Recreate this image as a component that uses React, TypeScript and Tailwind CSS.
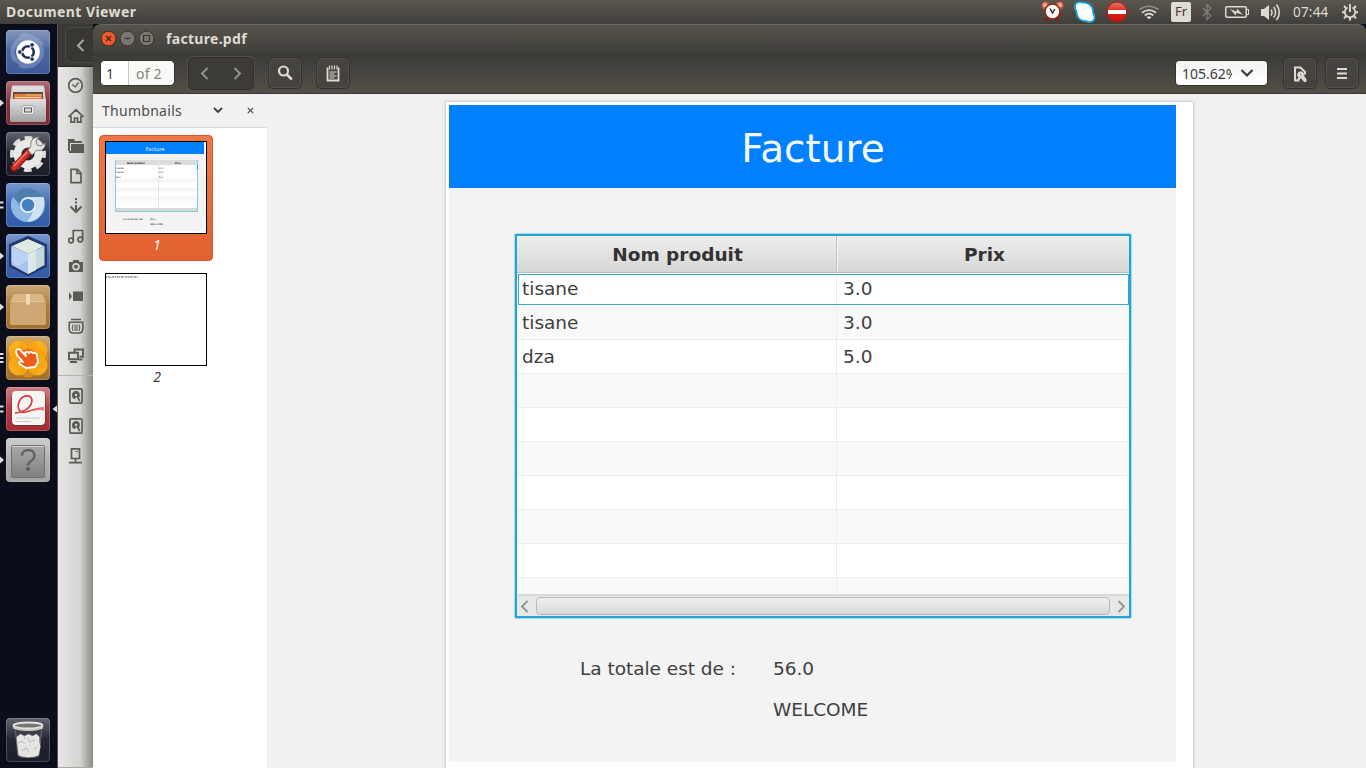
import React from "react";

const UI = "font-['Noto_Sans','Open_Sans',sans-serif]";
const DOC = "font-['DejaVu_Sans',sans-serif]";

/* ---------- Top panel ---------- */

function TopPanel() {
  return (
    <header className={`flex h-6 shrink-0 items-center bg-linear-to-b from-[#5b574d] to-[#403f3a] text-[#dfdbd2] ${UI}`}>
      <span className="ml-[6px] text-[14px] leading-6 font-bold tracking-[0.42px]">Document Viewer</span>
      <div className="ml-auto flex items-center pr-[7px]">
        <svg width="24" height="24" viewBox="1040 0 24 24" className="mr-[10px]">
          <path d="M1046 17l-2 4h3.500l1-2zM1058 17l2 4h-3.500l-1-2z" fill="#7d2313" />
          <circle cx="1045.500" cy="5.500" r="3.900" fill="#c95a48" />
          <circle cx="1059.500" cy="5.500" r="3.900" fill="#c95a48" />
          <circle cx="1045" cy="5" r="2.200" fill="#eca699" />
          <circle cx="1060" cy="5" r="2.200" fill="#eca699" />
          <circle cx="1052.500" cy="11.500" r="7.500" fill="#f8f8f6" stroke="#8e2b18" strokeWidth="1.600" />
          <path d="M1050 8.500l2.500 4.500 2.300-4" fill="none" stroke="#333" strokeWidth="1.500" />
        </svg>
        <svg width="23" height="24" viewBox="1074 0 23 24" className="mr-[9px]">
          <path d="M1076 3.500c2-2 5-1.500 7-.8 6-.5 10 4 10 8.300 0 1 0 1.500.3 2.500 2 3 1.500 6.500-.8 7.800-2 1.200-4.800.8-6.500-.3-6 .5-9.500-4-9.500-9.500-1.800-3-2-6-.5-8z" fill="#fff" stroke="#12a5de" strokeWidth="1.800" />
        </svg>
        <svg width="22" height="24" viewBox="1106 0 22 24" className="mr-[10px]">
          <defs><linearGradient id="stop" x2="0" y2="1"><stop stopColor="#e8776b" /><stop offset=".5" stopColor="#d8251b" /><stop offset="1" stopColor="#c01510" /></linearGradient></defs>
          <circle cx="1117" cy="12" r="10" fill="url(#stop)" stroke="#b3170f" />
          <rect x="1108" y="10" width="18" height="4" fill="#fff" />
        </svg>
        <svg width="22" height="24" viewBox="1138 0 22 24" className="mr-[11px]" fill="none" strokeWidth="1.700">
          <path d="M1139.500 9.500q9.500-6.500 19 0" stroke="#8e8b82" />
          <path d="M1142 12.800q7-5.200 14 0" stroke="#dfdbd2" />
          <path d="M1144.700 15.500q4.300-3.600 8.600 0" stroke="#dfdbd2" />
          <path d="M1146.500 17.300q2.500-2 5 0l-2.500 2z" fill="#dfdbd2" />
        </svg>
        <span className="mr-[11px] flex h-5 w-5 items-center justify-center rounded-[2px] bg-[#dfdbd2] text-[13px] text-[#3c3b37]">Fr</span>
        <svg width="12" height="24" viewBox="1202 0 12 24" className="mr-[11px]" fill="none" stroke="#84817a" strokeWidth="1.200">
          <path d="M1203 8l8 8-4 3.500V4.500l4 3.500-8 8" />
        </svg>
        <svg width="24" height="24" viewBox="1225 0 24 24" className="mr-[11px]">
          <rect x="1225.750" y="6.750" width="20.500" height="10.500" rx="1" fill="none" stroke="#dfdbd2" strokeWidth="1.500" />
          <rect x="1246.500" y="9.500" width="2" height="5" fill="#403f3a" stroke="#dfdbd2" />
          <path d="M1230 9l6.500 2.800.5-3 6 6-6.500-2-.7 2.700z" fill="#dfdbd2" />
        </svg>
        <svg width="22" height="24" viewBox="1260 0 22 24" className="mr-[11px]" fill="none" stroke="#dfdbd2" strokeWidth="1.500">
          <path d="M1261 9h3l5-4v15l-5-4h-3z" fill="#dfdbd2" stroke="none" />
          <path d="M1271 9.500q2 3 0 6M1273.700 7q3.800 5.300 0 10.500M1276.500 4.500q5.600 8 0 15.500" />
        </svg>
        <span className="mr-[11px] w-[38px] text-[13.500px] whitespace-nowrap tracking-[0.200px]">07:44</span>
        <svg width="17" height="24" viewBox="1342 0 17 24" fill="none" stroke="#dfdbd2">
          <path d="M1347.500 7.500a5.200 5.200 0 1 0 5 0" strokeWidth="1.700" />
          <path d="M1350 4v8" strokeWidth="1.900" />
          <path d="M1344 6l2 2M1356 6l-2 2M1342 12.200h3M1355 12.200h3M1344 18.200l2-2M1356 18.200l-2-2M1350 17.500v3" strokeWidth="2" />
        </svg>
      </div>
    </header>
  );
}

/* ---------- Launcher ---------- */

function Tile({ fill, stroke = "#ffffff30", mark, children }: { fill: string; stroke?: string; mark?: number; children?: React.ReactNode }) {
  return (
    <svg width="57" height="44" viewBox="0 0 57 44" className="block shrink-0">
      <rect x="6" y="0" width="44" height="44" rx="4" fill={fill} />
      <rect x="6" y="0" width="44" height="20" rx="4" fill="url(#gloss)" />
      {children}
      <rect x="6.500" y=".5" width="43" height="43" rx="3.500" fill="none" stroke={stroke} />
      {mark === 1 && <path d="M0 18.500l4 3.500-4 3.500z" fill="#dedede" />}
      {mark === 2 && <path d="M0 19.500h3.500M0 24.500h3.500" stroke="#dedede" strokeWidth="2" />}
      {mark === 3 && <path d="M0 18h3.500M0 22h3.500M0 26h3.500" stroke="#dedede" strokeWidth="2" />}
    </svg>
  );
}

function Launcher() {
  return (
    <nav className="flex w-[57px] shrink-0 flex-col justify-between bg-[#0b0d1a] pt-[6px] pb-[6px]">
      <div className="flex flex-col gap-[7px]">
        <Tile fill="url(#dash)">
          <defs>
            <linearGradient id="gloss" x2="0" y2="1"><stop stopColor="#fff" stopOpacity=".25" /><stop offset="1" stopColor="#fff" stopOpacity=".02" /></linearGradient>
            <linearGradient id="dash" x2="0" y2="1"><stop stopColor="#5873a8" /><stop offset="1" stopColor="#3e5a9a" /></linearGradient>
            <linearGradient id="red" x2="0" y2="1"><stop stopColor="#933b47" /><stop offset="1" stopColor="#7b2b36" /></linearGradient>
            <linearGradient id="blue" x2="0" y2="1"><stop stopColor="#4c76bd" /><stop offset="1" stopColor="#315aa8" /></linearGradient>
            <linearGradient id="dark" x2="0" y2="1"><stop stopColor="#2c2e3b" /><stop offset="1" stopColor="#1c1e2b" /></linearGradient>
            <linearGradient id="tan" x2="0" y2="1"><stop stopColor="#b98b4b" /><stop offset="1" stopColor="#a06f2e" /></linearGradient>
            <linearGradient id="crimson" x2="0" y2="1"><stop stopColor="#c0525a" /><stop offset="1" stopColor="#a52a32" /></linearGradient>
            <linearGradient id="grey" x2="0" y2="1"><stop stopColor="#bcbcbc" /><stop offset="1" stopColor="#a2a2a2" /></linearGradient>
            <linearGradient id="silver" x2="0" y2="1"><stop stopColor="#e0e0e0" /><stop offset="1" stopColor="#a2a2a2" /></linearGradient>
            <linearGradient id="unknown" x2="0" y2="1"><stop stopColor="#a9a9a9" /><stop offset="1" stopColor="#808080" /></linearGradient>
          </defs>
          <g fill="none" stroke="#c2cee2" opacity=".3" strokeWidth="4">
            <path d="M15 31C8 20 17 4 33 9M14 18C17 4 35 3 42 15M20 6C33 2 45 16 41 28M39 15C47 29 31 41 20 35M35 35C18 38 9 26 14 15" />
          </g>
          <circle cx="28" cy="22" r="11.800" fill="#fff" />
          <circle cx="28" cy="22" r="5.800" fill="none" stroke="#233258" strokeWidth="2.600" />
          <path d="M28 22L18 22M28 22l5-9M28 22l5 9" stroke="#fff" strokeWidth="1.400" />
          <g fill="#233258" stroke="#fff" strokeWidth=".7"><circle cx="19.800" cy="22" r="2.200" /><circle cx="32.100" cy="14.900" r="2.200" /><circle cx="32.100" cy="29.100" r="2.200" /></g>
        </Tile>
        <Tile fill="url(#red)" mark={1}>
          <path d="M12 5h32l2 15v18a3 3 0 0 1-3 3H13a3 3 0 0 1-3-3V20z" fill="url(#silver)" />
          <path d="M12.500 4.500h31l1 4h-33z" fill="#dcdcdc" />
          <rect x="13" y="11" width="30" height="9" fill="#5b4d45" />
          <path d="M14 13h28v6H14z" fill="#e79b4c" /><path d="M14 13h10l2 2h16v5H14z" fill="#e8763e" />
          <path d="M15 16.500h26" stroke="#f8d9ae" />
          <rect x="10" y="18" width="36" height="23" rx="2" fill="url(#silver)" />
          <rect x="22" y="24.500" width="12" height="9" rx="2" fill="#ececec" stroke="#aaa" />
          <rect x="24.500" y="27" width="7" height="4" fill="#ddd" stroke="#555" />
        </Tile>
        <Tile fill="url(#dark)">
          <circle cx="28" cy="22" r="15.500" fill="none" stroke="#dededc" strokeWidth="5" strokeDasharray="7.500 4.674" strokeDashoffset="3.750" />
          <circle cx="28" cy="22" r="10.500" fill="none" stroke="#e9e9e7" strokeWidth="8" />
          <circle cx="28" cy="22" r="6" fill="#2b2c36" />
          <path d="M14 36l16-17" stroke="#8d1513" strokeWidth="7" strokeLinecap="round" />
          <path d="M14 35.500L29.500 19" stroke="#d83227" strokeWidth="5" strokeLinecap="round" />
          <path d="M14 34l13-14" stroke="#f38273" strokeWidth="1.200" />
          <path d="M28 18l3-4c-1-5 2-9 8-9l-3 4 1 4 4 1 4-3c1 5-4 9-8 7l-5 5z" fill="#e6e6e4" stroke="#7d7d7b" />
        </Tile>
        <Tile fill="url(#blue)" mark={2}>
          <circle cx="28" cy="22" r="17" fill="#70a5d7" />
          <path d="M28 5a17 17 0 0 1 15.500 10H28a8 8 0 0 0-8 6L13 14A17 17 0 0 1 28 5z" fill="#4e7faa" />
          <path d="M28 14h15.500C47 24 41 39 27 39l8-14c3-5-1-11-7-11z" fill="#cfe2f3" />
          <path d="M13 14a17 17 0 0 0 13 25l6-10c-5 2-9 0-11-4z" fill="#8fbbe3" />
          <circle cx="28" cy="22" r="8" fill="#eef5fb" /><circle cx="28" cy="22" r="6.300" fill="#477fc4" />
        </Tile>
        <Tile fill="url(#blue)" mark={1}>
          <path d="M28 3l18 8v21L28 41 10 32V11z" fill="#24376a" stroke="#24376a" strokeWidth="2" strokeLinejoin="round" />
          <path d="M28 5l16 7-16 8-16-8z" fill="#deebe3" />
          <path d="M11.500 12l16.500 8v20l-16.500-9z" fill="#a8c3ed" /><path d="M11.500 12l16.500 8v6L18 32l-6.500-3z" fill="#bcd2f4" />
          <path d="M44.500 12L28 20v20l16.500-9z" fill="#c4d9df" /><path d="M28 20l8-4v20l-8 4z" fill="#dbe8ea" />
        </Tile>
        <Tile fill="url(#tan)" mark={1}>
          <path d="M14 9h28l4 8v21a2 2 0 0 1-2 2H12a2 2 0 0 1-2-2V17z" fill="#cda874" />
          <path d="M14 9h28l3 7H11z" fill="#d9b784" /><path d="M11 16.500h34" stroke="#e2c595" />
          <path d="M26 9h4v10l-2 1-2-1z" fill="#eedab7" />
        </Tile>
        <Tile fill="url(#tan)" mark={3}>
          <g fill="#ffb313" opacity=".9"><circle cx="18.500" cy="14.500" r="10" /><circle cx="37.500" cy="14.500" r="10" /><circle cx="18.500" cy="29.500" r="10" /><circle cx="37.500" cy="29.500" r="10" /></g>
          <g fill="#f9a012" opacity=".6"><circle cx="28" cy="12.500" r="10" /><circle cx="28" cy="31.500" r="10" /><circle cx="18" cy="22" r="10" /><circle cx="38" cy="22" r="10" /></g>
          <circle cx="28" cy="22" r="9.500" fill="#f4701c" />
          <path d="M16 15c1-3 4-2 5 0l5 5-1-3c1-2 3-1 4 0 1-2 3-1 4 0 2-1 4 1 4 3l1 6-3 5-9 1c-3-2-6-3-7-5 0-2 3-2 4-1l-6-7z" fill="#f05b1c" stroke="#fff" strokeWidth="1.800" strokeLinejoin="round" />
        </Tile>
        <Tile fill="url(#crimson)" mark={2}>
          <rect x="11.500" y="5" width="34" height="34" rx="4" fill="#7d2930" /><rect x="12" y="4" width="33" height="34" rx="4" fill="#f5f5f4" />
          <path d="M15 26c11-1 17-7 17-13-1-6-9-5-12 0-4 7-1 14 6 12 6-1 9-4 18-4" fill="none" stroke="#e0393f" strokeWidth="1.700" />
          <path d="M29 24c5-1 10-4 15-3v3c-5-2-8-.5-11 0z" fill="#e77b7d" />
          <path d="M16 31h24M16 34.500h15" stroke="#c8c8c8" />
          <path d="M57 18.500L52.500 22l4.500 3.500z" fill="#dedede" />
        </Tile>
        <Tile fill="url(#grey)" mark={1}>
          <rect x="11.500" y="7.500" width="33" height="32" rx="1" fill="url(#unknown)" stroke="#707070" />
          <path d="M12 8.500h32" stroke="#cfcfcf" />
          <path d="M22 17.500c0-7 12.500-7.500 12.500 0 0 6-6.500 5-6.500 10" fill="none" stroke="#626262" strokeWidth="2.500" /><circle cx="28" cy="31" r="2" fill="#5e5e5e" />
        </Tile>
      </div>
      <Tile fill="url(#dark)">
        <path d="M15 9h27l-3 29c-4 2-18 2-21 0z" fill="#3c3e4a" stroke="#656771" />
        <path d="M16.500 19l4-3 4 2 4-2 4 2 4-2 3 3v5l1 5-2 8c-3 3-17 3-20 0l-1-8z" fill="#e4e4e2" />
        <path d="M18 25l4-2 3 3M28 20l2 4 5-2M22 33l4-3 3 4M34 31l3-2M24 18l1 3" fill="none" stroke="#b7b8b6" />
        <ellipse cx="28" cy="7.500" rx="14.500" ry="3" fill="#777" stroke="#e5e5e1" strokeWidth="1.800" />
        <path d="M13 8v2c4 4 27 4 30 0V8c-4 4-26 4-30 0z" fill="#cacac6" />
      </Tile>
    </nav>
  );
}

/* ---------- Partly covered file manager window ---------- */

function Place({ className = "", children }: { className?: string; children: React.ReactNode }) {
  return (
    <svg width="16" height="16" viewBox="0 0 16 16" fill="none" stroke="#5b5a57" strokeWidth="1.700" className={`block shrink-0 ${className}`}>
      {children}
    </svg>
  );
}

function HarddiskIcon() {
  return (
    <>
      <rect x="1.900" y=".9" width="12.200" height="14.200" rx="1" />
      <path d="M4 7.500a4 4 0 1 1 7 2l1.500 3.500-1.500.5L8.500 9l-2 2.300A4 4 0 0 1 4 7.500z" fill="#5b5a57" stroke="none" />
      <circle cx="8" cy="7" r="1.200" fill="#d2d1cf" stroke="none" />
    </>
  );
}

function BackWindow() {
  return (
    <aside className="flex w-9 shrink-0 flex-col border-l border-[#56545a] bg-[#3b3a36]">
      <div className="flex h-[43px] items-center justify-end border-b border-[#25241f]">
        <div className="flex h-9 w-[28px] items-center justify-center rounded-l-md border border-r-0 border-[#4b4944] bg-[#383733]">
          <svg width="9" height="13" viewBox="0 0 9 13" className="ml-[2px]" fill="none" stroke="#aba89f" strokeWidth="2"><path d="M7.500 1L2 6.500 7.500 12" /></svg>
        </div>
      </div>
      <div className="flex grow flex-col border-b border-[#aaa9a6] bg-linear-to-r from-[#e9e8e6] via-[#d3d2d0] via-65% to-[#8b8a87] pt-[10px]">
        <div className="flex flex-col gap-[14px] pl-[10px]">
          <Place><circle cx="7.500" cy="8.500" r="6.800" /><path d="M4 7.500l3.300 2.300L10.500 5.500" strokeWidth="1.300" /></Place>
          <Place className="mt-px"><path d="M.5 9L8 1.800 15.500 9M3 8v6.200h3.500V10h3v4.200H13V8" /></Place>
          <Place><path d="M0 1h6l1 2h7v2H2v8H0zM3 6h13v9H1V13h2z" fill="#5b5a57" stroke="none" /></Place>
          <Place><path d="M3 1.300h6.500L13 5v9.700H3zM9 1v4.500h4" /></Place>
          <Place><path d="M8 0v2M8 3.500v2M8 7v7M2.500 8.500L8 14l5.500-5.500" strokeWidth="2" /></Place>
          <Place><circle cx="3" cy="12.500" r="2.300" /><circle cx="12.300" cy="11.500" r="2.300" /><path d="M5.300 12.500V2.500h9.300v9" /></Place>
          <Place><path d="M1 4h3.500l1-2h5l1 2H15v10H1z" fill="#5b5a57" stroke="none" /><circle cx="8" cy="8.800" r="2.900" fill="#5b5a57" stroke="#d5d4d2" /></Place>
          <Place><path d="M5 3.500h10v9.500H5zM1 4l3 4.300-3 4.300z" fill="#5b5a57" stroke="none" /></Place>
          <Place><path d="M3 1.500h10M.5 4.200h15M1.500 5c-1 6 0 10 3 10h7c3 0 4-4 3-10" strokeWidth="1.600" /><path d="M5 6.500q-1.500 3.500 0 6.500M7 6.500v6.500M9 6.500v6.500M11 6.500q1.500 3.500 0 6.500" strokeWidth="1.100" /></Place>
          <Place><path d="M6.500 4V1.500H15v7.300h-3.500M1 4.800h9v6.500H1zM2 14h7M11 11.500h3.500" strokeWidth="1.900" /></Place>
        </div>
        <div className="mt-[11px] mb-[12px] h-px bg-[#b5b4b1]" />
        <div className="flex flex-col gap-[14px] pl-[10px]">
          <Place><HarddiskIcon /></Place>
          <Place><HarddiskIcon /></Place>
          <Place><path d="M3.500.8h8v9.700h-8zM7.500 11v4M1 14.700h13" /><path d="M7.500 3.500h2.200" strokeWidth="1.200" /></Place>
        </div>
      </div>
    </aside>
  );
}

/* ---------- Document viewer window ---------- */

function TitleBar() {
  return (
    <div className={`flex h-[29px] shrink-0 items-center rounded-t-[8px] border-t border-[#6a665b] bg-linear-to-b from-[#56534a] to-[#403f3a] pl-[8px] ${UI}`}>
      <svg width="54" height="18" viewBox="0 0 54 18" fill="none">
        <circle cx="7.500" cy="8.500" r="7.400" fill="#ea5a2c" stroke="#3a2e27" /><path d="M5 6l5 5M10 6l-5 5" stroke="#512312" strokeWidth="1.300" />
        <circle cx="26.500" cy="8.500" r="7.400" fill="#78766e" stroke="#35342f" /><path d="M23.500 8.500h6" stroke="#37352f" strokeWidth="1.300" />
        <circle cx="45.500" cy="8.500" r="7.400" fill="#78766e" stroke="#35342f" /><path d="M42.500 5.500h6v6h-6z" stroke="#37352f" strokeWidth="1.200" />
      </svg>
      <span className="ml-[11px] text-[14px] leading-5 font-bold tracking-[0.300px] text-[#dfdbd2]">facture.pdf</span>
    </div>
  );
}

const toolButton = "flex h-8 w-[34px] items-center justify-center rounded-[5px] border border-[#33322e] bg-[#45433d] shadow-[inset_0_0_0_1px_#524f48]";

function Toolbar() {
  return (
    <div className={`flex h-[41px] shrink-0 items-center border-b border-[#3a3935] bg-linear-to-b from-[#3b3a36] to-[#524f47] pl-[7px] ${UI}`}>
      <div className="flex h-[26px] w-[75px] items-center overflow-hidden rounded-[5px] border border-[#33322e] bg-[#f8f8f7] text-[14px] text-[#3c3c3c]">
        <span className="flex h-full w-[28px] items-center border-r border-[#c7c6c3] bg-white pl-[5px]">1</span>
        <span className="pl-[7px] tracking-[0.200px] text-[#84827e]">of 2</span>
      </div>
      <div className="ml-[13px] flex h-[33px] w-[66px] items-center justify-between rounded-[5px] border border-[#302f2b] bg-[#3c3b37] px-[11px] shadow-[0_0_0_1px_#514f48]">
        <svg width="9" height="13" viewBox="0 0 9 13" fill="none" stroke="#94918a" strokeWidth="2"><path d="M7.500 1L2 6.500 7.500 12" /></svg>
        <svg width="9" height="13" viewBox="0 0 9 13" fill="none" stroke="#94918a" strokeWidth="2"><path d="M1.500 1L7 6.500 1.500 12" /></svg>
      </div>
      <div className={`ml-[14px] ${toolButton}`}>
        <svg width="16" height="16" viewBox="0 0 16 16" fill="none" stroke="#dfdbd2" strokeWidth="2.200"><circle cx="6.500" cy="6" r="4.500" /><path d="M9.800 9.300l5 5.200" strokeWidth="2.600" /></svg>
      </div>
      <div className={`ml-[14px] ${toolButton}`}>
        <svg width="16" height="17" viewBox="0 0 16 17" fill="none" stroke="#dfdbd2">
          <path d="M2.500 2.500v13h11v-13" strokeWidth="1.800" /><path d="M4.500.5v4M7 .5v4M9.500.5v4M12 .5v4" strokeWidth="1.200" />
          <path d="M4.500 7h7M4.500 9h5M4.500 11h7M4.500 13h5" strokeWidth="1" />
        </svg>
      </div>
      <div className="ml-auto flex h-[26px] w-[93px] items-center rounded-[4px] border border-[#33322e] bg-linear-to-b from-[#f2f2f1] to-white text-[14px] text-[#3c3c3c]">
        <span className="ml-[6px] w-[50px] overflow-hidden whitespace-nowrap">105.62%</span>
        <svg width="14" height="9" viewBox="0 0 14 9" className="ml-[8px]" fill="none" stroke="#3c3c3c" strokeWidth="2.200"><path d="M1.500 1L7 6.500 12.500 1" /></svg>
      </div>
      <div className={`ml-[15px] ${toolButton}`}>
        <svg width="14" height="17" viewBox="0 0 14 17" fill="none" stroke="#dfdbd2">
          <path d="M6.500 15.500H2v-13h5.500L12 7v2.500" strokeWidth="2" />
          <path d="M4.500 10a3.200 3.200 0 0 1 5.500-2.200c1 1 1 2.200.6 3.200L13 14v2.500h-2L8 12.500l-2 2.300-1.500-.5 1.800-2.300c-1-.4-1.800-1-1.800-2z" fill="#dfdbd2" />
          <circle cx="7.800" cy="9.800" r="1" fill="#45433d" />
        </svg>
      </div>
      <div className={`mr-[7px] ml-[8px] ${toolButton}`}>
        <svg width="10" height="11" viewBox="0 0 10 11" stroke="#dfdbd2" strokeWidth="2"><path d="M0 1h10M0 5.500h10M0 10h10" /></svg>
      </div>
    </div>
  );
}

function MiniPage() {
  return (
    <svg width="102" height="93" viewBox="0 0 102 93" className={`block ${DOC}`}>
      <rect x=".5" y=".5" width="101" height="92" fill="#fff" stroke="#000" />
      <rect x="1" y="1" width="98" height="89" fill="#f3f3f3" /><rect x="1" y="1" width="98" height="12" fill="#0080ff" />
      <text x="50" y="9.500" fontSize="5.200" fill="#fff" textAnchor="middle">Facture</text>
      <rect x="10.500" y="19.500" width="82" height="51" fill="#fff" stroke="#85cce3" />
      <rect x="11" y="19" width="81" height="5" fill="#dcdcdc" />
      <path d="M11 39.500h81M11 48.500h81M11 57.500h81" stroke="#f6f6f6" strokeWidth="4" />
      <path d="M53.500 19v48" stroke="#e5e5e5" /><path d="M92.500 24v4" stroke="#00a4d6" />
      <g fontSize="2.500" fill="#222">
        <text x="22" y="23" fontWeight="bold">Nom produit</text><text x="70" y="23" fontWeight="bold">Prix</text>
        <text x="11" y="27.500">tisane</text><text x="54" y="27.500">3.0</text>
        <text x="11" y="32">tisane</text><text x="54" y="32">3.0</text>
        <text x="11" y="36.500">dza</text><text x="54" y="36.500">5.0</text>
        <text x="18" y="78.500">La totale est de :</text><text x="45" y="78.500">56.0</text><text x="45" y="84">WELCOME</text>
      </g>
      <rect x="11" y="67" width="81" height="3" fill="#d8d8d8" />
    </svg>
  );
}

function Thumbnails() {
  return (
    <section className={`flex w-[174px] shrink-0 flex-col bg-white text-[#3c3c3c] ${UI}`}>
      <div className="flex h-[34px] items-center border-b border-[#dad9d7] bg-[#f2f1f0] pl-[9px]">
        <span className="w-[111px] text-[14px] tracking-[0.280px] text-[#4b4b4b]">Thumbnails</span>
        <svg width="10" height="7" viewBox="0 0 10 7" fill="none" stroke="#3c3c3c" strokeWidth="1.800"><path d="M1 1l4 4 4-4" /></svg>
        <svg width="7" height="7" viewBox="0 0 7 7" className="ml-[24px]" fill="none" stroke="#4c4c4c" strokeWidth="1.200"><path d="M.8.8l5.400 5.400M6.200.8L.8 6.200" /></svg>
      </div>
      <div className="mt-[7px] ml-[6px] flex h-[126px] w-[114px] flex-col items-center rounded-[4px] border border-[#d0592c] bg-linear-to-b from-[#f07746] to-[#e2622f] pt-[5px]">
        <MiniPage />
        <span className="mt-[1px] pl-[2px] text-[13.500px] leading-5 text-white italic">1</span>
      </div>
      <div className="mt-[12px] ml-[6px] flex w-[114px] flex-col items-center">
        <svg width="102" height="93" viewBox="0 0 102 93" className={`block ${DOC}`}>
          <rect x=".5" y=".5" width="101" height="92" fill="#fff" stroke="#000" />
          <path d="M1 4h32" stroke="#888" strokeWidth="1.600" strokeDasharray="1 .8 2 .6" />
        </svg>
        <span className="mt-[1px] pl-[2px] text-[14px] leading-5 italic">2</span>
      </div>
    </section>
  );
}

const rows = [
  ["tisane", "3.0"], ["tisane", "3.0"], ["dza", "5.0"],
  ["", ""], ["", ""], ["", ""], ["", ""], ["", ""], ["", ""], ["", ""],
];

function ProductTable() {
  return (
    <div className="flex h-[384px] w-[616px] flex-col overflow-hidden rounded-[1px] border-2 border-[#22a3d0] bg-white shadow-[0_0_1px_1px_#a5dced]">
      <div className="flex h-[37px] shrink-0 border-b border-[#bcbcbc] bg-linear-to-b from-[#eeeeee] to-[#d6d6d6] pt-[2px] text-[18.500px] font-bold text-[#333]">
        <div className="-mt-[2px] flex w-[320px] items-center justify-center border-r border-[#c2c2c2] pt-[2px] pl-[2px]">Nom produit</div>
        <div className="-mt-[2px] flex grow items-center justify-center border-l border-[#f3f3f3] pt-[2px] pl-[2px]">Prix</div>
      </div>
      <div className="flex h-[321px] shrink-0 flex-col overflow-hidden">
        {rows.map(([name, price], i) => (
          <div
            key={i}
            className={
              i === 0
                ? "mt-px mb-px ml-px flex h-[31px] shrink-0 border border-[#35a9cf] bg-white"
                : i % 2
                  ? "flex h-[34px] shrink-0 border-b border-[#ededed] bg-[#f9f9f9]"
                  : "flex h-[34px] shrink-0 border-b border-[#ededed] bg-white"
            }
          >
            <div className={i === 0 ? "flex w-[318px] items-center border-r border-[#ededed] pb-[2px] pl-[3px]" : "flex w-[320px] items-center border-r border-[#ededed] pl-[5px]"}>{name}</div>
            <div className={i === 0 ? "flex items-center pb-[2px] pl-[6px]" : "flex items-center pl-[6px]"}>{price}</div>
          </div>
        ))}
      </div>
      <div className="flex h-[22px] items-center border-t-2 border-[#d9d9d9] bg-[#e8e8e8]">
        <svg width="19" height="16" viewBox="0 0 19 16" fill="none" stroke="#929292" strokeWidth="1.800"><path d="M10.500 3L5 8.500l5.500 5.500" /></svg>
        <div className="h-[18px] w-[574px] rounded-[4px] border border-[#b9b9b9] bg-linear-to-b from-[#efefef] to-[#d9d9d9]" />
        <svg width="19" height="16" viewBox="0 0 19 16" fill="none" stroke="#929292" strokeWidth="1.800"><path d="M8.500 3L14 8.500 8.500 14" /></svg>
      </div>
    </div>
  );
}

function Page() {
  return (
    <div className={`mt-2 ml-[179px] h-[680px] w-[747px] shrink-0 bg-white pt-[3px] pl-[3px] text-[18.500px] text-[#404040] shadow-[0_0_3px_#aaa9a7] ${DOC}`}>
      <div className="flex h-[657px] w-[727px] flex-col bg-[#f3f3f3]">
        <h1 className="h-[83px] shrink-0 bg-[#0080ff] pl-px text-center text-[39px] leading-[87px] font-normal text-[#f5f9ff]">Facture</h1>
        <div className="mt-[46px] ml-[66px]"><ProductTable /></div>
        <div className="mt-[38px] ml-[131px] grid grid-cols-[193px_1fr] leading-[26px] tracking-[-0.030px]">
          <span>La totale est de :</span><span>56.0</span>
          <span className="col-start-2 mt-[15px]">WELCOME</span>
        </div>
      </div>
    </div>
  );
}

export default function App() {
  return (
    <div className="flex h-[768px] w-[1366px] flex-col overflow-hidden bg-[#0b0d1a]">
      <TopPanel />
      <div className="flex min-h-0 grow">
        <Launcher />
        <BackWindow />
        <main className="flex min-w-0 grow flex-col">
          <TitleBar />
          <Toolbar />
          <div className="flex min-h-0 grow overflow-hidden bg-[#f2f1f0]">
            <Thumbnails />
            <Page />
          </div>
        </main>
      </div>
    </div>
  );
}
